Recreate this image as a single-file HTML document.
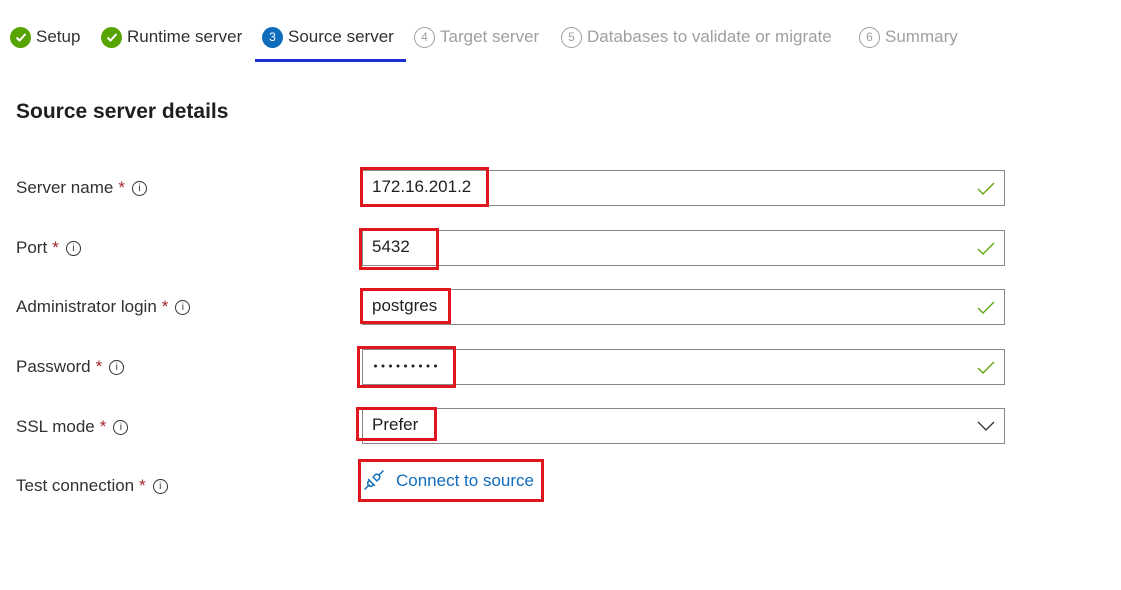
<!DOCTYPE html><html><head><style>
body{margin:0;width:1121px;height:590px;background:#fff;font-family:"Liberation Sans",sans-serif;position:relative;overflow:hidden;color:#323130}
.a{position:absolute}
.step{position:absolute;top:25px;font-size:17px;white-space:nowrap;height:24px;display:flex;align-items:center}
.ci{display:inline-flex;align-items:center;justify-content:center;width:21px;height:21px;border-radius:50%;margin-right:5px;font-size:12px;box-sizing:border-box;flex:none}
.g{background:#57a300}
.dis{color:#a19f9d}.dis .ci{border:1.5px solid #a19f9d;color:#a19f9d}
.lab{position:absolute;left:16px;font-size:17px;display:flex;align-items:center;height:22px}
.lab i{font-style:normal;color:#a4262c;margin-left:5px}
.info{display:inline-flex;align-items:center;justify-content:center;width:13px;height:13px;border:1.3px solid #323130;border-radius:50%;font-size:10px;margin-left:7px;font-style:normal}
.inp{position:absolute;left:362px;width:643px;height:36px;border:1px solid #8a8886;box-sizing:border-box}
.red{position:absolute;border:3px solid #e0161e;box-sizing:border-box}
.val{position:absolute;font-size:17px;color:#201f1e}
.chk{position:absolute;right:8px;top:10px}
</style></head><body>
<div class="step" style="left:10px"><span class="ci g"><svg width="20" height="20" viewBox="0 0 20 20"><path d="M5.5 10.5l3 3 6-6.5" stroke="#fff" stroke-width="2" fill="none"/></svg></span>Setup</div>
<div class="step" style="left:101px"><span class="ci g"><svg width="20" height="20" viewBox="0 0 20 20"><path d="M5.5 10.5l3 3 6-6.5" stroke="#fff" stroke-width="2" fill="none"/></svg></span>Runtime server</div>
<div class="step" style="left:262px"><span class="ci" style="background:#0f6cbd;color:#fff">3</span>Source server</div>
<div class="a" style="left:255px;top:59px;width:151px;height:3px;background:#1a2fd1"></div>
<div class="step dis" style="left:414px"><span class="ci">4</span>Target server</div>
<div class="step dis" style="left:561px"><span class="ci">5</span>Databases to validate or migrate</div>
<div class="step dis" style="left:859px"><span class="ci">6</span>Summary</div>
<div class="a" style="left:16px;top:100px;font-size:21px;font-weight:bold;color:#201f1e">Source server details</div>

<div class="lab" style="top:177px">Server name<i>*</i><span class="info">i</span></div>
<div class="lab" style="top:237px">Port<i>*</i><span class="info">i</span></div>
<div class="lab" style="top:296px">Administrator login<i>*</i><span class="info">i</span></div>
<div class="lab" style="top:356px">Password<i>*</i><span class="info">i</span></div>
<div class="lab" style="top:416px">SSL mode<i>*</i><span class="info">i</span></div>
<div class="lab" style="top:475px">Test connection<i>*</i><span class="info">i</span></div>

<div class="inp" style="top:170px"><svg class="chk" width="20" height="16"><path d="M2 8l5 5 11-11" stroke="#57a300" stroke-width="1.3" fill="none"/></svg></div>
<div class="inp" style="top:230px"><svg class="chk" width="20" height="16"><path d="M2 8l5 5 11-11" stroke="#57a300" stroke-width="1.3" fill="none"/></svg></div>
<div class="inp" style="top:289px"><svg class="chk" width="20" height="16"><path d="M2 8l5 5 11-11" stroke="#57a300" stroke-width="1.3" fill="none"/></svg></div>
<div class="inp" style="top:349px"><svg class="chk" width="20" height="16"><path d="M2 8l5 5 11-11" stroke="#57a300" stroke-width="1.3" fill="none"/></svg></div>
<div class="inp" style="top:408px"><svg class="chk" width="20" height="16" style="top:9px"><path d="M2 4l8 8 8-8" stroke="#323130" stroke-width="1.3" fill="none"/></svg></div>

<div class="red" style="left:360px;top:167px;width:129px;height:40px"></div>
<div class="red" style="left:359px;top:228px;width:80px;height:42px"></div>
<div class="red" style="left:360px;top:288px;width:91px;height:36px"></div>
<div class="red" style="left:357px;top:346px;width:99px;height:42px"></div>
<div class="red" style="left:356px;top:407px;width:81px;height:34px"></div>
<div class="red" style="left:358px;top:459px;width:186px;height:43px"></div>

<div class="val" style="left:372px;top:177px">172.16.201.2</div>
<div class="val" style="left:372px;top:237px">5432</div>
<div class="val" style="left:372px;top:296px">postgres</div>
<svg class="a" style="left:374px;top:363px" width="66" height="6"><g fill="#201f1e"><circle cx="1.5" cy="3" r="1.5"/><circle cx="9" cy="3" r="1.5"/><circle cx="16.5" cy="3" r="1.5"/><circle cx="24" cy="3" r="1.5"/><circle cx="31.5" cy="3" r="1.5"/><circle cx="39" cy="3" r="1.5"/><circle cx="46.5" cy="3" r="1.5"/><circle cx="54" cy="3" r="1.5"/><circle cx="61.5" cy="3" r="1.5"/></g></svg>
<div class="val" style="left:372px;top:415px">Prefer</div>
<svg class="a" style="left:364px;top:470px" width="20" height="20" viewBox="0 0 20 20"><g stroke="#0f6cbd" stroke-width="1.5" fill="none" stroke-linecap="round"><path d="M1 19l4-4"/><path d="M15 5l4-4"/><path d="M4.5 9.5l6 6"/><path d="M5.5 10.5l-1.5 1.5a3 3 0 0 0 4 4l1.5-1.5"/><path d="M9 7l4 4"/><path d="M10 6l1.5-1.5a3 3 0 0 1 4 4l-1.5 1.5"/></g></svg>
<div class="val" style="left:396px;top:471px;color:#0f6cbd">Connect to source</div>
</body></html>
